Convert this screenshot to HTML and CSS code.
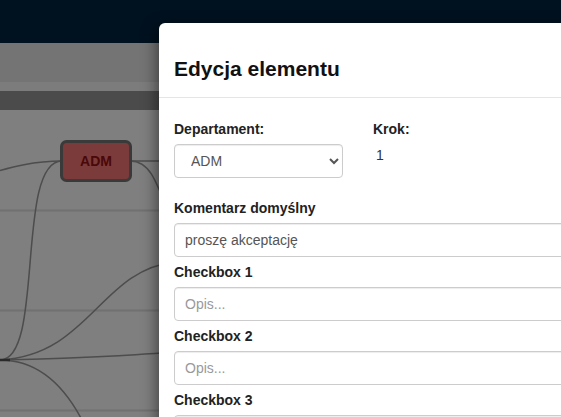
FILE: index.html
```html
<!DOCTYPE html>
<html lang="pl">
<head>
<meta charset="UTF-8">
<meta name="viewport" content="width=device-width, initial-scale=1.0">
<title>Edycja elementu</title>
<link rel="stylesheet" href="styles.css">
</head>
<body>
<div class="app">
    <div class="topnav"></div>
    <div class="toolbar"></div>
    <div class="strip"></div>
    <div class="tabbar"></div>
    <div class="canvas">
        <svg class="diagram" width="561" height="307" viewBox="0 0 561 307">
            <!-- grid -->
            <line class="grid" x1="0" y1="100.5" x2="561" y2="100.5"/>
            <line class="grid" x1="0" y1="200.5" x2="561" y2="200.5"/>
            <line class="grid" x1="0" y1="300.5" x2="561" y2="300.5"/>
            <!-- links -->
            <path class="link" d="M-20,66 C15,56 35,51 62,51"/>
            <path class="link" d="M0,250 C45,250 15,51 62,51"/>
            <path class="link" d="M130,51 L561,51"/>
            <path class="link" d="M130,51 C150,51 156,70 172,112"/>
            <path class="link" d="M0,250 C90,245 100,160 175,152"/>
            <path class="link" d="M0,250 C100,248 150,244 200,240"/>
            <path class="link" d="M0,250 C35,250 62,272 82,310"/>
            <path class="link thick" d="M-5,250 L10,250"/>
            <!-- node -->
            <rect class="node" x="61.5" y="31.5" width="69" height="39" rx="5"/>
            <text class="node-label" x="96" y="56" text-anchor="middle">ADM</text>
        </svg>
    </div>
</div>

<div class="modal">
    <div class="modal-header">
        <h4 class="modal-title">Edycja elementu</h4>
    </div>
    <div class="modal-body">
        <div class="row">
            <div class="col-dept">
                <label>Departament:</label>
                <select class="form-control">
                    <option>ADM</option>
                </select>
            </div>
            <div class="col-step">
                <label>Krok:</label>
                <p class="static">1</p>
            </div>
        </div>
        <div class="form-group">
            <label>Komentarz domyślny</label>
            <input class="form-control" type="text" value="proszę akceptację">
        </div>
        <div class="form-group">
            <label>Checkbox 1</label>
            <input class="form-control" type="text" placeholder="Opis...">
        </div>
        <div class="form-group">
            <label>Checkbox 2</label>
            <input class="form-control" type="text" placeholder="Opis...">
        </div>
        <div class="form-group">
            <label>Checkbox 3</label>
            <input class="form-control" type="text" placeholder="Opis...">
        </div>
    </div>
</div>
</body>
</html>
```

FILE: styles.css
```css
html, body {
    margin: 0;
    height: 100%;
    overflow: hidden;
}
body {
    font-family: "Liberation Sans", Arial, sans-serif;
    font-size: 14px;
    color: #333;
    background-color: #7f7f7f;
}
.app {
    display: flex;
    flex-direction: column;
    height: 100%;
}
.topnav {
    height: 43px;
    background-color: #00111f; /* navbar under the backdrop */
}
.toolbar {
    height: 39px;
    background-color: #747474;
}
.strip {
    height: 9px;
    background-color: #7c7c7c;
}
.tabbar {
    height: 19px;
    background-color: #4b4b4b;
}
.canvas {
    flex: 1;
    background-color: #7f7f7f;
}
.diagram {
    display: block;
}
.grid {
    stroke: #717171;
    stroke-width: 2;
}
.link {
    fill: none;
    stroke: #4d4d4d;
    stroke-width: 1.5;
}
.link.thick {
    stroke: #2a2a2a;
    stroke-width: 2.5;
}
.node {
    fill: #7b3b3b;
    stroke: #3a3a3a;
    stroke-width: 3;
}
.node-label {
    font-family: "Liberation Sans", Arial, sans-serif;
    font-size: 14px;
    font-weight: bold;
    fill: #4a0808;
}

/* modal */
.modal {
    position: absolute;
    left: 159px;
    top: 23px;
    width: 640px;
    background-color: #fff;
    border-radius: 6px;
    box-shadow: -2px 5px 15px rgba(0, 0, 0, 0.5);
}
.modal-header {
    padding: 15px;
    border-bottom: 1px solid #e5e5e5;
}
.modal-title {
    margin: 19px 0 2px;
    font-size: 21px;
    line-height: 23px;
    font-weight: bold;
    color: #111;
}
.modal-body {
    padding: 21px 15px 15px;
}
label {
    display: block;
    font-weight: bold;
    line-height: 20px;
    margin-bottom: 5px;
    color: #222;
}
.row {
    display: flex;
    gap: 30px;
    margin-bottom: 20px;
}
.col-dept {
    width: 169px;
}
.static {
    margin: 6px 0 0 3px;
    line-height: 20px;
}
.form-group {
    margin-bottom: 5px;
}
.form-control {
    display: block;
    width: 100%;
    height: 34px;
    box-sizing: border-box;
    padding: 6px 10px;
    font-family: inherit;
    font-size: 14px;
    color: #555;
    background-color: #fff;
    border: 1px solid #ccc;
    border-radius: 4px;
    box-shadow: inset 0 1px 1px rgba(0, 0, 0, 0.075);
}
select.form-control {
    padding: 6px 8px 6px 12px;
}
.form-control::placeholder {
    color: #999;
}
```
